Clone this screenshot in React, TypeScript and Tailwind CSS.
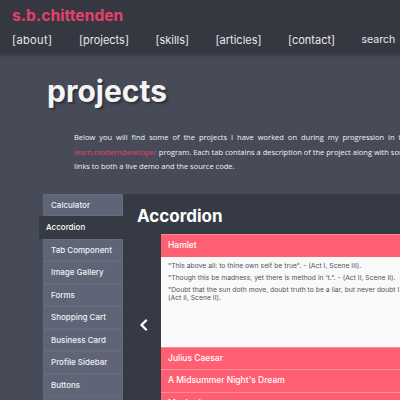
import React from 'react';

const navItems = ['[about]', '[projects]', '[skills]', '[articles]', '[contact]'];

const tabs = [
  'Calculator',
  'Accordion',
  'Tab Component',
  'Image Gallery',
  'Forms',
  'Shopping Cart',
  'Business Card',
  'Profile Sidebar',
  'Buttons',
];

const quotes = [
  '"This above all: to thine own self be true". - (Act I, Scene III).',
  '"Though this be madness, yet there is method in \'t.". - (Act II, Scene II).',
  '"Doubt that the sun doth move, doubt truth to be a liar, but never doubt I love". - (Act II, Scene II).',
];

const App: React.FC = () => {
  return (
    <div className="w-[400px] h-[400px] overflow-hidden bg-[#474b57] font-['Inter',sans-serif]">
      {/* Header */}
      <header className="h-[53px] bg-[#353841] px-3 pt-[5px] shadow-[0_2px_3px_rgba(0,0,0,0.25)] relative z-10">
        <div className="text-[15.5px] font-bold text-[#e6406b] leading-[22px] tracking-[0.1px]">s.b.chittenden</div>
        <nav className="flex gap-[26.5px] mt-[5px] text-[11px] text-[#e8e8ea] whitespace-nowrap leading-[16px]">
          {navItems.map((item) => (
            <span key={item} className="first:tracking-[0.4px]">{item}</span>
          ))}
          <span className="text-[10.5px]">search</span>
        </nav>
      </header>

      {/* Intro */}
      <div className="pl-[47px] pt-[22px]">
        <h1 className="text-[30px] font-bold text-[#f4f4f4] leading-[32px] [text-shadow:2px_2px_2px_rgba(0,0,0,0.35)]">projects</h1>
      </div>
      <div className="ml-[74px] mt-[23px] w-max font-['Open_Sans',sans-serif] text-[7.5px] leading-[14.5px] text-[#f2f2f2]">
        <p className="text-justify [text-align-last:justify]">
          Below you will find some of the projects I have worked on during my progression in the
        </p>
        <p className="whitespace-nowrap">
          <span className="text-[#e6406b]">learn.moderndeveloper</span> program. Each tab contains a description of the project along with some
        </p>
        <p className="whitespace-nowrap">links to both a live demo and the source code.</p>
      </div>

      {/* Tabs + panel */}
      <div className="flex mt-[20px] pl-[43px]">
        <ul className="w-[80px] shrink-0 bg-[#5f6576]">
          {tabs.map((tab) => (
            <li
              key={tab}
              className={
                tab === 'Accordion'
                  ? 'h-[22.5px] -ml-[4px] pl-[7px] flex items-center bg-[#363a45] text-white text-[8px] font-medium'
                  : 'h-[22.5px] pl-[7px] flex items-center border border-[#666c7c] text-[#eef0f3] text-[8px] font-medium'
              }
            >
              {tab}
            </li>
          ))}
        </ul>
        <div className="flex-1 bg-[#363a45] pl-[14px] pt-[11px] min-w-0">
          <h2 className="text-[17px] font-bold text-white leading-[22px]">Accordion</h2>
          <div className="flex mt-[7px]">
            <div className="w-[24px] shrink-0 flex items-center">
              <svg width="9" height="12" viewBox="0 0 9 12" className="ml-[2px] mt-[3px]">
                <path d="M7 1.5 L2.5 6 L7 10.5" stroke="white" strokeWidth="2.4" fill="none" strokeLinecap="round" strokeLinejoin="round" />
              </svg>
            </div>
            <div className="flex-1 min-w-0 w-[260px]">
              <div className="h-[23px] bg-[#ff5f73] border-t border-[#ff8898] pl-[7px] flex items-center text-[8.5px] font-medium text-white">Hamlet</div>
              <div className="h-[90px] bg-[#f9f9f9] pl-[7px] pt-[5px] text-[6.8px] text-[#555] leading-[8px] w-[300px]">
                {quotes.map((q) => (
                  <p key={q} className="mb-[4px] w-[265px]">{q}</p>
                ))}
              </div>
              {['Julius Caesar', "A Midsummer Night's Dream", 'Macbeth'].map((t) => (
                <div key={t} className="h-[22.5px] bg-[#ff5f73] border-t border-[#ff8c9a] pl-[7px] flex items-center text-[8.5px] font-medium text-white whitespace-nowrap">
                  {t}
                </div>
              ))}
            </div>
          </div>
        </div>
      </div>
    </div>
  );
};

export default App;
